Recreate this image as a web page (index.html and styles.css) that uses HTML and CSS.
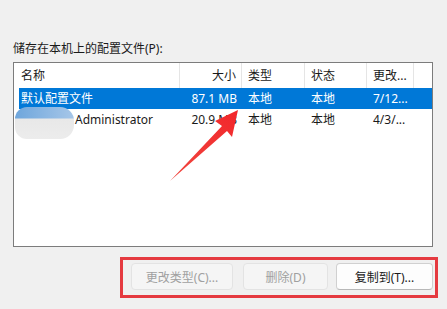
FILE: index.html
```html
<!DOCTYPE html>
<html>
<head>
<meta charset="utf-8">
<link rel="stylesheet" href="styles.css">
</head>
<body>
<div class="page">
  <div class="label">储存在本机上的配置文件(P):</div>
  <div class="listbox">
    <div class="grid header">
      <div class="cell c1">名称</div>
      <div class="cell c2">大小</div>
      <div class="cell c3">类型</div>
      <div class="cell c4">状态</div>
      <div class="cell c5">更改...</div>
    </div>
    <div class="grid row selected">
      <div class="cell c1">默认配置文件</div>
      <div class="cell c2">87.1 MB</div>
      <div class="cell c3">本地</div>
      <div class="cell c4">本地</div>
      <div class="cell c5">7/12...</div>
    </div>
    <div class="grid row">
      <div class="cell c1 user">Administrator</div>
      <div class="cell c2">20.9 MB</div>
      <div class="cell c3">本地</div>
      <div class="cell c4">本地</div>
      <div class="cell c5">4/3/...</div>
    </div>
    <div class="blob"></div>
  </div>
  <div class="actions">
    <div class="highlight">
      <button class="btn b1" disabled>更改类型(C)...</button>
      <button class="btn b2" disabled>删除(D)</button>
      <button class="btn b3">复制到(T)...</button>
    </div>
  </div>
  <svg class="arrow" width="447" height="309" viewBox="0 0 447 309">
    <defs>
      <linearGradient id="ag" x1="0" y1="1" x2="1" y2="0">
        <stop offset="0" stop-color="#f0483f"/>
        <stop offset="1" stop-color="#f2262b"/>
      </linearGradient>
    </defs>
    <polygon points="238,110 215,121 222,126 170,181 227,131 232,137" fill="url(#ag)"/>
  </svg>
</div>
</body>
</html>
```

FILE: styles.css
```css
* { box-sizing: border-box; }
html, body {
  margin: 0;
  padding: 0;
  background: #f0f0f0;
}
body {
  font-family: "Noto Sans", "Noto Sans CJK SC", sans-serif;
  font-size: 12px;
  color: #1a1a1a;
}
.page {
  position: relative;
  width: 447px;
  height: 309px;
  overflow: hidden;
}
.label {
  padding-top: 40px;
  padding-left: 13px;
  line-height: 18px;
  height: 58px;
}
.listbox {
  position: relative;
  margin-top: 4px;
  margin-left: 13px;
  width: 420px;
  height: 185px;
  background: #ffffff;
  border: 1px solid #7c7c7c;
  padding-left: 5px;
}
.grid {
  display: grid;
  grid-template-columns: 161px 62px 63px 62px 47px;
}
.header {
  height: 25px;
}
.header .cell {
  border-right: 1px solid #e5e5e5;
  line-height: 25px;
}
.row {
  height: 21px;
}
.row .cell {
  line-height: 21px;
}
.cell {
  white-space: nowrap;
  overflow: hidden;
  padding-left: 6px;
}
.cell.c1 { padding-left: 2px; }
.cell.c2 { text-align: right; padding-left: 0; padding-right: 5px; }
.cell.c5 { padding-left: 6px; }
.cell.user { padding-left: 56px; }
.selected {
  background: #0078d7;
  color: #ffffff;
}
.blob {
  position: absolute;
  left: 1px;
  top: 44px;
  width: 59px;
  height: 32px;
  border-radius: 12px 14px 14px 12px;
  background:
    linear-gradient(to bottom, rgba(255,255,255,0) 0, rgba(255,255,255,0) 11px, #e8e8e8 12px, #ececec 100%),
    linear-gradient(to right, #6ea6dc 0%, #a6c6e8 100%);
}
.actions {
  display: flex;
  justify-content: flex-end;
  padding-right: 9px;
  margin-top: 10px;
}
.highlight {
  display: flex;
  border: 3px solid #e53a40;
  padding: 3px 2px 5px 8px;
  gap: 0;
}
.btn {
  height: 27px;
  font-family: "Noto Sans", "Noto Sans CJK SC", sans-serif;
  font-size: 12px;
  border-radius: 4px;
  padding: 0;
  margin: 0;
}
.btn[disabled] {
  background: #f5f5f5;
  border: 1px solid #e3e3e3;
  color: #a0a0a0;
}
.b1 { width: 102px; }
.b2 { width: 85px; margin-left: 10px; }
.b3 {
  width: 97px;
  margin-left: 8px;
  background: #fdfdfd;
  border: 1px solid #d0d0d0;
  border-bottom-color: #b8b8b8;
  color: #1a1a1a;
}
.arrow {
  position: absolute;
  left: 0;
  top: 0;
  pointer-events: none;
}
```
